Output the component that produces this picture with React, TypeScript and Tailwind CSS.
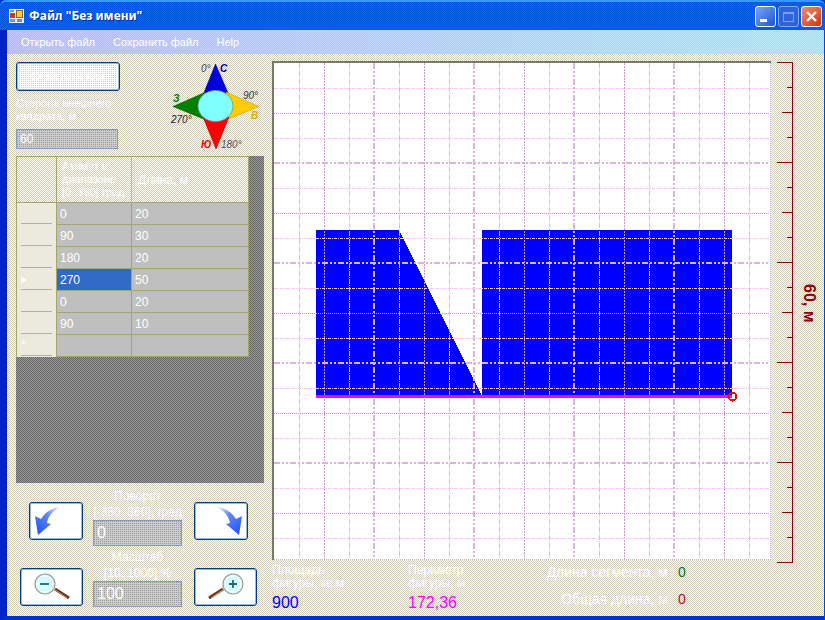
import React from "react";

const BEIGE =
  "bg-[repeating-conic-gradient(#d0ccc0_0_25%,#ffffd4_0_50%,#d4ccc0_0_75%,#fffff0_0_100%)] bg-[length:2px_2px]";
const SILVER =
  "bg-[repeating-conic-gradient(#cccccc_0_75%,#999999_0_100%)] bg-[length:2px_2px]";
const GRAY =
  "bg-[repeating-conic-gradient(#999999_0_25%,#666666_0_50%)] bg-[length:2px_2px]";
const BLUE =
  "bg-[repeating-conic-gradient(#0066ff_0_25%,#0055e0_0_50%)] bg-[length:2px_2px]";

const BUTTON =
  "flex items-center justify-center rounded-[3px] border border-[#003c80] ring-1 ring-inset ring-[#00528a]/40 bg-white";

const rows: [string, string, string][] = [
  ["", "0", "20"],
  ["", "90", "30"],
  ["", "180", "20"],
  ["▸", "270", "50"],
  ["", "0", "20"],
  ["", "90", "10"],
  ["*", "", ""],
];

function TitleBar() {
  return (
    <header className={`flex h-[30px] items-center gap-[5px] rounded-t-md border-t-2 border-[#3399ff] pl-[9px] pr-[3px] ${BLUE}`}>
      <svg width="15" height="15" viewBox="0 0 15 15" shapeRendering="crispEdges" aria-hidden="true">
        <rect x="0" y="0" width="15" height="14" fill="#eee" />
        <rect x="1" y="4" width="5" height="5" fill="#c33b1a" />
        <rect x="1" y="1" width="4" height="2" fill="#6699cc" />
        <rect x="7" y="1" width="6" height="7" fill="#ffcc33" stroke="#996600" strokeWidth="1" />
        <rect x="1" y="10" width="5" height="3" fill="#6699ff" />
        <rect x="8" y="10" width="5" height="3" fill="#6688cc" />
      </svg>
      <h1 className="flex-1 font-['Noto_Sans',sans-serif] text-[12px] font-bold text-white [text-shadow:1px_1px_0_#003399]">
        Файл "Без имени"
      </h1>
      <div className="flex gap-[2px]">
        <button aria-label="Свернуть" className="size-[21px] rounded-[3px] border border-white bg-linear-to-br from-[#7aa5f5] to-[#1c50d8]">
          <svg viewBox="0 0 19 19"><rect x="4" y="12" width="7" height="3" fill="#fff" /></svg>
        </button>
        <button disabled aria-label="Развернуть" className="size-[21px] rounded-[3px] border border-[#86a8ef] bg-[#2c63de]">
          <svg viewBox="0 0 19 19" shapeRendering="crispEdges">
            <path d="M4.5 5.5h10v9h-10z" fill="none" stroke="#7f9ff0" />
            <path d="M4 5h11v2H4z" fill="#7f9ff0" />
          </svg>
        </button>
        <button aria-label="Закрыть" className="size-[21px] rounded-[3px] border border-white bg-linear-to-br from-[#f08a68] to-[#cc3300]">
          <svg viewBox="0 0 19 19"><path d="M5 5l9 9M14 5l-9 9" stroke="#fff" strokeWidth="2.4" /></svg>
        </button>
      </div>
    </header>
  );
}

function Compass() {
  return (
    <svg width="96" height="92" viewBox="168 61 96 92" className="shrink-0 font-['Liberation_Sans',Arial,sans-serif] text-[10px] italic" aria-label="Стороны света">
      <path d="M215.500 63L229 94H203z" fill="#0000dd" stroke="#000066" strokeWidth=".5" />
      <path d="M173 105.500L206 91V119z" fill="#008000" stroke="#004400" strokeWidth=".5" />
      <path d="M259 105.500L226 91V119z" fill="#ffcc00" stroke="#bb9900" strokeWidth=".5" />
      <path d="M216 148L203 116H229z" fill="#ff0000" stroke="#880000" strokeWidth=".5" />
      <ellipse cx="215.500" cy="105" rx="17.500" ry="15.500" fill="#80ffff" stroke="#669999" strokeWidth=".8" />
      <text x="201" y="71" fill="#444">0°</text>
      <text x="220" y="71" fill="#000099" fontWeight="bold">С</text>
      <text x="243" y="98" fill="#333">90°</text>
      <text x="251" y="118" fill="#d9b300" fontWeight="bold">В</text>
      <text x="173" y="101" fill="#008000" fontWeight="bold">З</text>
      <text x="171" y="122" fill="#222">270°</text>
      <text x="201" y="147" fill="#e01000" fontWeight="bold">Ю</text>
      <text x="221" y="147" fill="#555">180°</text>
    </svg>
  );
}

function SegmentTable() {
  return (
    <div className={`h-[327px] w-[248px] ${GRAY}`}>
      <table className="w-[233px] table-fixed border-collapse text-left text-[12px] text-white">
        <colgroup>
          <col className="w-[40px]" />
          <col className="w-[75px]" />
          <col />
        </colgroup>
        <thead>
          <tr className={`h-[46px] border border-[#a5a56c] ${BEIGE}`}>
            <th className="border-r border-[#a5a56c]" aria-label="Строка" />
            <th className="border-r border-[#bbbbbb] p-0 pl-[5px] text-[11px] leading-[13px] font-normal whitespace-nowrap">
              Азимут в<br />диапазоне<br />[0..360] град
            </th>
            <th className="p-0 pl-[6px] font-normal">Длина, м</th>
          </tr>
        </thead>
        <tbody>
          {rows.map(([mark, angle, length], i) => (
            <tr key={i} className="h-[22px]">
              <th className="border-x border-[#a5a56c] bg-[#eceadf] px-[4px] py-0 font-normal">
                <span className="block h-[21px] border-b border-[#b0b0a8] leading-[20px]">{mark}</span>
              </th>
              <td className={`border border-[#a5a56c] p-0 pl-[3px] ${i === 3 ? "bg-[#316ac5]" : SILVER}`}>{angle}</td>
              <td className={`border border-[#a5a56c] p-0 pl-[3px] ${SILVER}`}>{length}</td>
            </tr>
          ))}
        </tbody>
      </table>
    </div>
  );
}

function TurnArrow({ flip = false }: { flip?: boolean }) {
  return (
    <svg width="46" height="34" viewBox="0 0 46 34" aria-hidden="true" className={flip ? "-scale-x-100" : ""}>
      <defs>
        <linearGradient id={flip ? "turnR" : "turnL"} x1="1" y1="0" x2="0.200" y2="1">
          <stop offset="0" stopColor="#e8f0ff" />
          <stop offset=".4" stopColor="#6688ee" />
          <stop offset="1" stopColor="#2255ff" />
        </linearGradient>
      </defs>
      <path d="M27 3C19 4 12 8 8 15L2 12L5 31L18 20L14 19C15 12 20 7 27 3z" fill={`url(#${flip ? "turnR" : "turnL"})`} />
    </svg>
  );
}

function Magnifier({ plus = false }: { plus?: boolean }) {
  return (
    <svg width="42" height="32" viewBox="0 0 42 32" aria-hidden="true">
      <g transform={plus ? "translate(42 0) scale(-1 1)" : undefined}>
        <path d="M24 18l14 9" stroke="#663322" strokeWidth="3" />
        <path d="M23 18l13 9" stroke="#cc9966" strokeWidth="1" />
        <circle cx="14" cy="13" r="10" fill="#d5fafa" stroke="#999" strokeWidth="1.200" />
        <circle cx="14" cy="13" r="8" fill="none" stroke="#fff" />
        <path d={plus ? "M10 13h8M14 9v8" : "M9 13h9"} stroke="#226677" strokeWidth="1.800" />
      </g>
    </svg>
  );
}

function Stepper(props: { id: string; title: string; range: string; value: string; left: React.ReactNode; right: React.ReactNode; wide?: boolean }) {
  const size = props.wide ? "w-[63px]" : "w-[54px]";
  const lift = props.wide ? "pb-[1px]" : "pb-[6px]";
  return (
    <div className="flex items-end">
      <div className={`mr-[10px] flex w-[67px] justify-end ${lift}`}>
        <button aria-label={`${props.title} −`} className={`${BUTTON} h-[38px] ${size}`}>{props.left}</button>
      </div>
      <div className="w-[89px] text-center text-[12px] leading-[16px] text-white">
        <label htmlFor={props.id} className="block whitespace-nowrap">
          {props.title}
          <br />
          {props.range}
        </label>
        <input id={props.id} defaultValue={props.value} className={`block h-[26px] w-full border border-[#7f9db9] pl-[3px] text-[16px] text-white ${SILVER}`} />
      </div>
      <div className={`ml-[12px] ${lift}`}>
        <button aria-label={`${props.title} +`} className={`${BUTTON} h-[38px] ${size}`}>{props.right}</button>
      </div>
    </div>
  );
}

const steps = Array.from({ length: 19 }, (_, i) => (i + 1) * 25);

function Plot() {
  return (
    <svg viewBox="274 63 497 497" className="block w-full" shapeRendering="crispEdges" aria-label="Фигура">
      <rect x="274" y="63" width="497" height="497" fill="#fff" />
      <path d="M316 230H399L482 396H316z" fill="#0000ff" />
      <rect x="482" y="230" width="250" height="166" fill="#0000ff" />
      {steps.map((d) => {
        const x = 274 + d;
        const y = 63 + d;
        const major = d % 100 === 0;
        const mid = d % 50 === 0;
        return (
          <g key={d} fill="none">
            {major ? (
              <path d={`M274 ${y}H770`} stroke="#dbb3de" strokeWidth="2" strokeDasharray="6 2 2 2 2 2" />
            ) : (
              <path d={`M274 ${y + 0.5}H770`} stroke={mid ? "#cc99cc" : "#f3c3f3"} strokeDasharray={mid ? "1 1" : "3 1 1 1"} />
            )}
            {major ? (
              <path d={`M${x} 63V559`} stroke="#dbb3de" strokeWidth="2" strokeDasharray="6 2 2 2 2 2" />
            ) : (
              <path d={`M${x + 0.5} 63V559`} stroke={mid ? "#cc99cc" : "#c8c8c8"} strokeDasharray={mid ? "2 1" : "5 1 1 1"} />
            )}
          </g>
        );
      })}
      <path d="M316 396.500H732" stroke="#ff00ff" strokeWidth="3" />
      <circle cx="732.500" cy="396.500" r="4" fill="none" stroke="#ff0000" strokeWidth="2" />
      <path d="M770.500 63V560M274 559.500H771" stroke="#bbb" strokeDasharray="1 1" />
    </svg>
  );
}

function Ruler() {
  return (
    <div className="flex w-[53px] shrink-0 items-center gap-[7px] pt-[1px] pl-[6px] text-[#8b0000]">
      <svg width="16" height="501" viewBox="0 0 16 501" shapeRendering="crispEdges" aria-hidden="true">
        <path d="M15.500 0V501" stroke="#8b0000" />
        {Array.from({ length: 21 }, (_, i) => (
          <path key={i} d={`M${i % 4 === 0 ? 0 : i % 2 === 0 ? 5 : 10} ${i * 25 + 0.5}H16`} stroke="#8b0000" />
        ))}
      </svg>
      <span className="pb-[18px] text-[16px] leading-[18px] font-bold [writing-mode:vertical-rl]">60, м</span>
    </div>
  );
}

export default function App() {
  return (
    <div className="min-h-screen bg-[#0033cc] font-['Liberation_Sans',Arial,sans-serif]">
      <TitleBar />
      <div className="border-r border-b-4 border-l-[7px] border-[#0044ee] border-b-[#0033cc] border-l-[#0022cc]">
        <nav className="h-[24px] bg-linear-to-r from-[#b4b6f8] to-[#a6e0ee]">
          <div className="flex h-full items-center gap-[18px] bg-[repeating-conic-gradient(#ffffff40_0_25%,#ffffff00_0_50%)] bg-[length:2px_2px] pl-[14px] text-[11px] text-white">
            <button>Открыть файл</button>
            <button>Сохранить файл</button>
            <button>Help</button>
          </div>
        </nav>
        <main className={`flex ${BEIGE}`}>
          <aside className="w-[265px] shrink-0 pt-[8px] pb-[9px] pl-[9px]">
            <div className="flex h-[94px] justify-between pr-[8px]">
              <div className="w-[104px]">
                <button className={`${BUTTON} h-[29px] w-full text-[12px] text-white`}>
                  <span className="m-[2px] flex h-[23px] flex-1 items-center justify-center bg-[repeating-conic-gradient(#ffffff_0_75%,#cccccc_0_100%)] bg-[length:2px_2px]">
                    Очистить все
                  </span>
                </button>
                <label htmlFor="side" className="mt-[6px] block text-[11px] leading-[13px] whitespace-nowrap text-white">
                  Сторона внешнего
                  <br />
                  квадрата, м
                </label>
                <input id="side" defaultValue="60" className={`mt-[6px] block h-[20px] w-[102px] border border-[#7f9db9] pl-[3px] text-[12px] text-white ${SILVER}`} />
              </div>
              <Compass />
            </div>
            <SegmentTable />
            <div className="mt-[5px] flex flex-col gap-[3px]">
              <Stepper id="turn" title="Поворот" range="[-360..360], град" value="0" left={<TurnArrow />} right={<TurnArrow flip />} />
              <Stepper id="zoom" title="Масштаб" range="[10..1000] %" value="100" left={<Magnifier />} right={<Magnifier plus />} wide />
            </div>
          </aside>
          <section className="min-w-0 flex-1 pt-[7px]">
            <div className="flex items-start">
              <div className="min-w-0 flex-1 border-t-2 border-l-2 border-[#77776a]">
                <Plot />
              </div>
              <Ruler />
            </div>
            <div className="flex pt-[1px] text-[12px] leading-[13px] text-white">
              <div className="w-[136px]">
                Площадь
                <br />
                фигуры, кв.м
                <output className="block pt-[3px] text-[16px] leading-[20px] text-[#0000ff]">900</output>
              </div>
              <div className="w-[134px]">
                Периметр
                <br />
                фигуры, м
                <output className="block pt-[3px] text-[16px] leading-[20px] text-[#ff00ff]">172,36</output>
              </div>
              <dl className="grid grid-cols-[126px_auto] content-start gap-x-[10px] gap-y-[11px] text-[14px] leading-[16px]">
                <dt className="text-right whitespace-nowrap">Длина сегмента, м</dt>
                <dd className="text-[#008000]">0</dd>
                <dt className="text-right whitespace-nowrap">Общая длина, м</dt>
                <dd className="text-[#b01010]">0</dd>
              </dl>
            </div>
          </section>
        </main>
      </div>
    </div>
  );
}
